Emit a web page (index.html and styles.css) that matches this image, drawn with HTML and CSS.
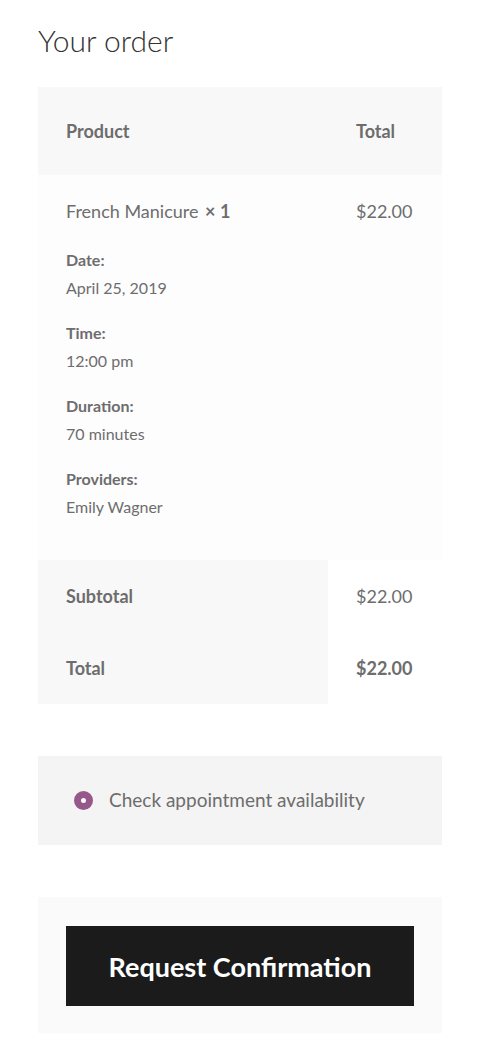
FILE: index.html
```html
<!DOCTYPE html>
<html>
<head>
	<title>Your order</title>
	<link rel="stylesheet" href="styles.css">
</head>
<body>
	<div class="checkout">
	<h3 class="order-heading">Your order</h3>

	<table class="order-review">
		<thead>
			<tr>
				<th class="product-name">Product</th>
				<th class="product-total">Total</th>
			</tr>
		</thead>
		<tbody>
			<tr class="cart-item">
				<td class="product-name">
					French Manicure <strong class="product-quantity">&times;&nbsp;1</strong>
					<dl class="variation">
						<dt>Date:</dt>
						<dd>April 25, 2019</dd>
						<dt>Time:</dt>
						<dd>12:00 pm</dd>
						<dt>Duration:</dt>
						<dd>70 minutes</dd>
						<dt>Providers:</dt>
						<dd>Emily Wagner</dd>
					</dl>
				</td>
				<td class="product-total">$22.00</td>
			</tr>
		</tbody>
		<tfoot>
			<tr class="cart-subtotal">
				<th>Subtotal</th>
				<td>$22.00</td>
			</tr>
			<tr class="order-total">
				<th>Total</th>
				<td><strong>$22.00</strong></td>
			</tr>
		</tfoot>
	</table>

	<div class="payment">
		<label class="payment-method">
			<span class="radio"></span>
			Check appointment availability
		</label>
	</div>

	<div class="place-order">
		<button class="button-confirm">Request Confirmation</button>
	</div>
	</div>
</body>
</html>
```

FILE: styles.css
```css
body {
	margin: 0;
	background-color: #fff;
	color: #6d6d6d;
	font-family: Lato, "Noto Sans", sans-serif;
	font-size: 18px;
	line-height: 28px;
}
.checkout {
	padding: 0 37px 0 38px;
}
.order-heading {
	margin: 0;
	padding-top: 20px;
	height: 67px;
	font-size: 30px;
	line-height: 40px;
	font-weight: 300;
	color: #333;
}
.order-review {
	width: 404px;
	border-collapse: collapse;
	border-spacing: 0;
}
.order-review th,
.order-review td {
	text-align: left;
	vertical-align: top;
	padding: 22px 28px;
}
.order-review thead th {
	background-color: #f8f8f8;
	padding-top: 30px;
	padding-bottom: 30px;
	font-weight: 700;
}
.order-review th.product-name {
	width: 234px;
}
.order-review tbody td {
	background-color: #fdfdfd;
}
.product-quantity {
	font-weight: 700;
	margin-left: 2px;
}
dl.variation {
	margin: 21px 0 0;
	font-size: 16px;
}
dl.variation dt {
	font-weight: 700;
}
dl.variation dd {
	margin: 0 0 17px;
}
.order-review tfoot th {
	background-color: #f8f8f8;
	font-weight: 700;
}
.order-review tfoot td {
	background-color: #fff;
}
.payment {
	margin-top: 52px;
	background-color: #f4f4f4;
	padding: 30px 36px 31px;
	height: 28px;
	font-size: 19px;
}
.payment-method {
	display: flex;
	align-items: center;
	gap: 16px;
}
.radio {
	width: 5px;
	height: 5px;
	border: 7px solid #96588a;
	border-radius: 50%;
	background-color: #fff;
}
.place-order {
	margin-top: 52px;
	background-color: #fafafa;
	padding: 29px 29px 27px 28px;
}
.button-confirm {
	display: block;
	width: 348px;
	height: 80px;
	border: 0;
	background-color: #1b1b1b;
	color: #fff;
	font-family: Lato, "Noto Sans", sans-serif;
	font-size: 27px;
	font-weight: 700;
}
```
